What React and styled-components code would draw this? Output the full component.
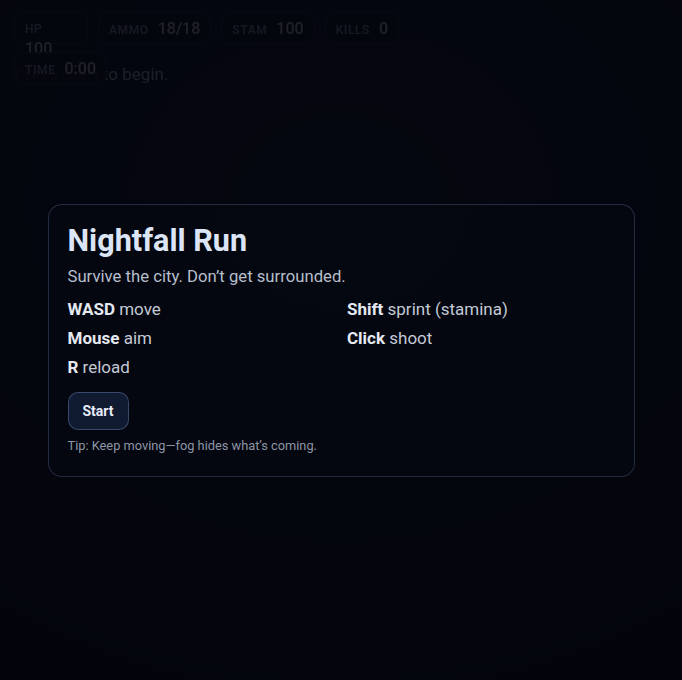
import React from 'react';
import styled, { createGlobalStyle } from 'styled-components';

const GlobalStyle = createGlobalStyle`
    html, body, #root { margin:0; padding:0; height:100%; }
    body {
        font-family: Roboto, "Noto Sans", "Liberation Sans", sans-serif;
        background:#05070d;
        overflow:hidden;
    }
`;

const Stage = styled.div`
    position:relative;
    width:100%;
    height:100vh;
    overflow:hidden;
    background:
        radial-gradient(ellipse 90% 75% at 50% 30%, #121a33 0%, #0e1428 50%, #06070d 100%);
`;

const Hud = styled.div`
    position:absolute;
    top:12px;
    left:14px;
    width:400px;
    display:flex;
    flex-wrap:wrap;
    gap:8px 10px;
    z-index:2;
    filter:blur(0.6px);
`;

const Pill = styled.div`
    display:flex;
    flex-wrap:${p => (p.$w ? 'wrap' : 'nowrap')};
    align-items:baseline;
    align-content:flex-start;
    gap:0 9px;
    width:${p => p.$w || 'auto'};
    height:32px;
    padding:6px 10px 0;
    box-sizing:border-box;
    background:rgba(14,19,33,0.9);
    border:1px solid rgba(150,170,210,0.2);
    border-radius:8px;
`;

const Label = styled.span`
    font-size:12px;
    line-height:20px;
    font-weight:600;
    letter-spacing:0.05em;
    color:#9aa6bd;
    text-transform:uppercase;
`;

const Value = styled.span`
    font-size:16px;
    line-height:20px;
    font-weight:500;
    color:#e2e9f7;
`;

const Hint = styled.div`
    position:absolute;
    top:64px;
    left:15px;
    font-size:17px;
    color:#d0d8e6;
    z-index:1;
    filter:blur(0.6px);
`;

const Overlay = styled.div`
    position:absolute;
    inset:0;
    z-index:5;
    display:flex;
    align-items:center;
    justify-content:center;
    background:rgba(3,5,11,0.88);
`;

const Card = styled.div`
    width:587px;
    box-sizing:border-box;
    padding:18px 19px 21px;
    background:rgba(5,8,16,0.85);
    border:1px solid rgba(110,130,175,0.3);
    border-radius:14px;
`;

const Title = styled.h1`
    margin:0 0 6px;
    font-size:30.6px;
    line-height:36px;
    font-weight:700;
    color:#dce5f6;
`;

const Subtitle = styled.p`
    margin:0;
    font-size:16.7px;
    line-height:24px;
    color:#b6becc;
`;

const Controls = styled.div`
    display:grid;
    grid-template-columns:1fr 1fr;
    column-gap:12px;
    row-gap:5px;
    margin-top:8px;
`;

const Control = styled.div`
    font-size:17px;
    line-height:24px;
    color:#c3cad6;
    b { font-weight:700; color:#e4e9f2; }
`;

const StartButton = styled.button`
    display:block;
    margin-top:13px;
    height:38px;
    padding:0 14px;
    font-family:inherit;
    font-size:14px;
    font-weight:700;
    color:#e6ecf7;
    background:#101a31;
    border:1px solid rgba(120,145,190,0.4);
    border-radius:10px;
    cursor:pointer;
`;

const Tip = styled.div`
    margin-top:7px;
    font-size:12.8px;
    line-height:18px;
    color:#8d95a5;
`;

const controls = [
    ['WASD', 'move'],
    ['Shift', 'sprint (stamina)'],
    ['Mouse', 'aim'],
    ['Click', 'shoot'],
    ['R', 'reload'],
];

export default function App() {
    return (
        <Stage>
            <GlobalStyle />
            <Hint>Press Start to begin.</Hint>
            <Hud>
                <Pill $w="74px"><Label>HP</Label><Value>100</Value></Pill>
                <Pill><Label>Ammo</Label><Value>18/18</Value></Pill>
                <Pill><Label>Stam</Label><Value>100</Value></Pill>
                <Pill><Label>Kills</Label><Value>0</Value></Pill>
                <Pill><Label>Time</Label><Value>0:00</Value></Pill>
            </Hud>
            <Overlay>
                <Card>
                    <Title>Nightfall Run</Title>
                    <Subtitle>Survive the city. Don’t get surrounded.</Subtitle>
                    <Controls>
                        {controls.map(([k, d]) => (
                            <Control key={k}><b>{k}</b> {d}</Control>
                        ))}
                    </Controls>
                    <StartButton>Start</StartButton>
                    <Tip>Tip: Keep moving—fog hides what’s coming.</Tip>
                </Card>
            </Overlay>
        </Stage>
    );
}
